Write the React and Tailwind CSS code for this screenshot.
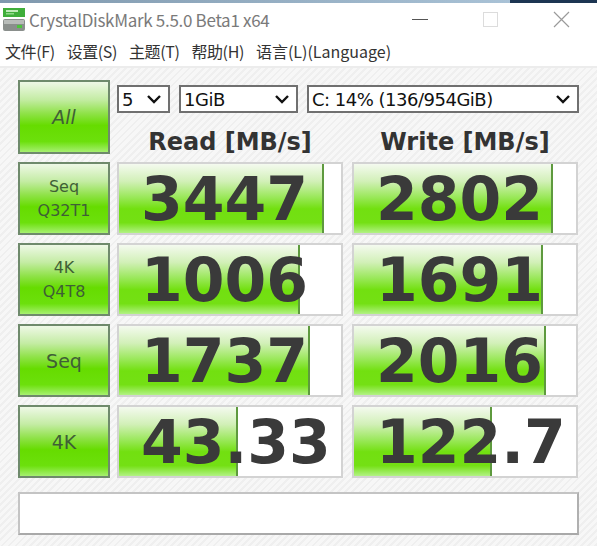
import React from 'react'

const rows = [
  { label: ['Seq', 'Q32T1'], read: '3447', readPct: 205, write: '2802', writePct: 199 },
  { label: ['4K', 'Q4T8'], read: '1006', readPct: 181, write: '1691', writePct: 189 },
  { label: ['Seq'], read: '1737', readPct: 191, write: '2016', writePct: 192 },
  { label: ['4K'], read: '43.33', readPct: 119, write: '122.7', writePct: 138 },
]

const btnBg =
  'bg-[linear-gradient(to_bottom,#eef8e6_0%,#c4eca4_25%,#8fe248_45%,#66dc00_62%,#6ce00c_85%,#a6f070_100%)]'
const barBg =
  'bg-[linear-gradient(to_bottom,#f4faef_0%,#d2f0b8_25%,#9ae85a_48%,#72e010_65%,#74e014_85%,#b2f284_100%)]'

function Chevron() {
  return (
    <svg width="16" height="12" viewBox="0 0 16 12">
      <polyline points="2,3 8,9 14,3" fill="none" stroke="#111" strokeWidth="2.4" />
    </svg>
  )
}

function Select({ width, text }) {
  return (
    <div
      className={`${width} h-[28px] border-2 border-[#707070] bg-white flex items-center justify-between pl-[3px] pr-[6px] text-[18px] text-[#111] font-['DejaVu_Sans',sans-serif] tracking-[-0.5px]`}
    >
      <span>{text}</span>
      <Chevron />
    </div>
  )
}

function LabelButton({ lines, italic }) {
  return (
    <div
      className={`w-[92px] h-full border-2 border-[#6f8a6c] ${btnBg} flex flex-col items-center justify-center text-[#3f5f36] leading-[24px] font-['DejaVu_Sans',sans-serif] ${
        lines.length > 1 ? 'text-[16px]' : 'text-[19px]'
      } ${italic ? 'italic' : ''}`}
    >
      {lines.map((l) => (
        <span key={l}>{l}</span>
      ))}
    </div>
  )
}

function Bar({ value, fill }) {
  return (
    <div className="relative w-[226px] h-full border-2 border-[#d3d3d3] bg-white overflow-hidden">
      <div
        className={`absolute left-0 top-0 bottom-0 ${barBg} border-r-2 border-[#5e9a3e]`}
        style={{ width: fill }}
      />
      <div className="relative h-full flex items-center pl-[22px] text-[60px] font-bold text-[#3a3a3a] font-['DejaVu_Sans',sans-serif] leading-none">
        {value}
      </div>
    </div>
  )
}

function AppIcon() {
  return (
    <svg width="24" height="26" viewBox="0 0 24 26">
      <rect x="1" y="1" width="22" height="9" fill="#3fae3a" />
      <rect x="4" y="3" width="12" height="2" fill="#bfeab8" />
      <rect x="4" y="6" width="8" height="1.5" fill="#8fd889" />
      <rect x="1" y="12" width="22" height="12" rx="2" fill="#8a8f8c" />
      <rect x="2" y="13" width="20" height="4" fill="#b8bcb9" />
      <rect x="15" y="18" width="5" height="3" fill="#4cc43c" />
    </svg>
  )
}

export default function App() {
  return (
    <div className="w-[597px] h-[546px] bg-white overflow-hidden flex flex-col font-['Noto_Sans',sans-serif]">
      <div className="h-[3px] flex">
        <div className="flex-1 bg-[linear-gradient(to_right,#7f98ad,#a9c2d6)]" />
        <div className="w-[87px] bg-[#1d3552]" />
      </div>

      <div className="h-[33px] flex items-center">
        <div className="pl-[2px] pr-[3px] flex items-center">
          <AppIcon />
        </div>
        <span className="text-[17px] text-[#7a7a7a] font-['Noto_Sans_CJK_SC','Noto_Sans',sans-serif] tracking-[-0.3px]">
          CrystalDiskMark 5.5.0 Beta1 x64
        </span>
        <div className="ml-auto flex items-center h-full">
          <div className="w-[71px] h-full flex items-center justify-center">
            <div className="w-[16px] h-[1px] bg-[#555]" />
          </div>
          <div className="w-[71px] h-full flex items-center justify-center">
            <div className="w-[15px] h-[15px] border border-[#dcdcdc]" />
          </div>
          <div className="w-[71px] h-full flex items-center justify-center">
            <svg width="17" height="17" viewBox="0 0 17 17">
              <path d="M1 1 L16 16 M16 1 L1 16" stroke="#9a9a9a" strokeWidth="1.2" />
            </svg>
          </div>
        </div>
      </div>

      <div className="h-[30px] flex items-center gap-[12px] pl-[5px] text-[16px] text-[#333] font-['Noto_Sans_CJK_SC',sans-serif] tracking-[-0.4px]">
        <span>文件(F)</span>
        <span>设置(S)</span>
        <span>主题(T)</span>
        <span>帮助(H)</span>
        <span className="tracking-[0px]">语言(L)(Language)</span>
      </div>

      <div className="h-[2px] bg-[#ececec]" />

      <div className="flex-1 pt-[12px] pl-[18px] bg-[repeating-linear-gradient(135deg,#f7f7f7_0px,#f7f7f7_3px,#efefef_3px,#efefef_5px)]">
        <div className="flex flex-col gap-[8px]">
          <div className="h-[74px] flex gap-[7px]">
            <LabelButton lines={['All']} italic />
            <div className="flex flex-col">
              <div className="flex gap-[9px] mt-[5px]">
                <Select width="w-[53px]" text="5" />
                <Select width="w-[119px]" text="1GiB" />
                <Select width="w-[272px]" text="C: 14% (136/954GiB)" />
              </div>
              <div className="flex-1 flex gap-[9px] items-end font-['DejaVu_Sans',sans-serif] font-bold text-[24px] leading-[24px] text-[#333]">
                <div className="w-[226px] text-center">Read [MB/s]</div>
                <div className="w-[226px] text-center">Write [MB/s]</div>
              </div>
            </div>
          </div>

          {rows.map((r, i) => (
            <div key={i} className="h-[73px] flex">
              <LabelButton lines={r.label} />
              <div className="w-[7px]" />
              <Bar value={r.read} fill={r.readPct} />
              <div className="w-[9px]" />
              <Bar value={r.write} fill={r.writePct} />
            </div>
          ))}
        </div>

        <div className="mt-[14px] w-[561px] h-[43px] bg-white border-2 border-[#c4c4c4] border-b-[#a9a9a9] border-r-[#b0b0b0]" />
      </div>
    </div>
  )
}
